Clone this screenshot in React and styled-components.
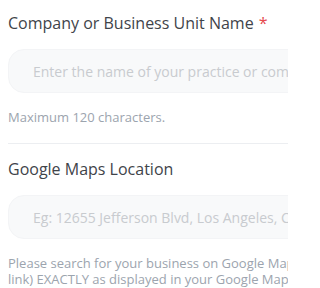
import React from 'react'
import styled, { createGlobalStyle } from 'styled-components'

const GlobalStyle = createGlobalStyle`
  html, body {
    margin: 0;
    padding: 0;
    background: #ffffff;
  }
  body {
    font-family: "Open Sans", Lato, sans-serif;
  }
`

const Viewport = styled.div`
  width: 288px;
  height: 288px;
  overflow: hidden;
`

const Form = styled.form`
  width: 560px;
  padding: 12px 8px 0;
  display: flex;
  flex-direction: column;
`

const Field = styled.div`
  display: flex;
  flex-direction: column;
  padding-bottom: ${p => (p.$divided ? '18px' : '0')};
  border-bottom: ${p => (p.$divided ? '1px solid #eceef1' : 'none')};
  margin-bottom: ${p => (p.$divided ? '14px' : '0')};
`

const Label = styled.label`
  font-size: 16px;
  line-height: 22px;
  color: #3f444a;
  margin-bottom: 15px;
`

const Required = styled.span`
  color: #e5484d;
  margin-left: 5px;
`

const Input = styled.input`
  height: 44px;
  box-sizing: border-box;
  border: 1px solid #f3f4f6;
  border-radius: 16px;
  background: #f8f9fa;
  padding: 0 24px;
  font-family: inherit;
  font-size: 14px;
  color: #3f444a;
  outline: none;
  &::placeholder {
    color: #c8cbcf;
  }
`

const Help = styled.p`
  margin: 16px 0 0;
  font-size: 13px;
  line-height: 16px;
  color: #9ca4ae;
`

export default function App() {
  return (
    <>
      <GlobalStyle />
      <Viewport>
        <Form>
          <Field $divided>
            <Label>
              Company or Business Unit Name<Required>*</Required>
            </Label>
            <Input placeholder="Enter the name of your practice or company" />
            <Help>Maximum 120 characters.</Help>
          </Field>
          <Field>
            <Label>Google Maps Location</Label>
            <Input placeholder="Eg: 12655 Jefferson Blvd, Los Angeles, CA 90066" />
            <Help>
              Please search for your business on Google Maps and enter the address (or
              <br />
              link) EXACTLY as displayed in your Google Maps listing.
            </Help>
          </Field>
        </Form>
      </Viewport>
    </>
  )
}
